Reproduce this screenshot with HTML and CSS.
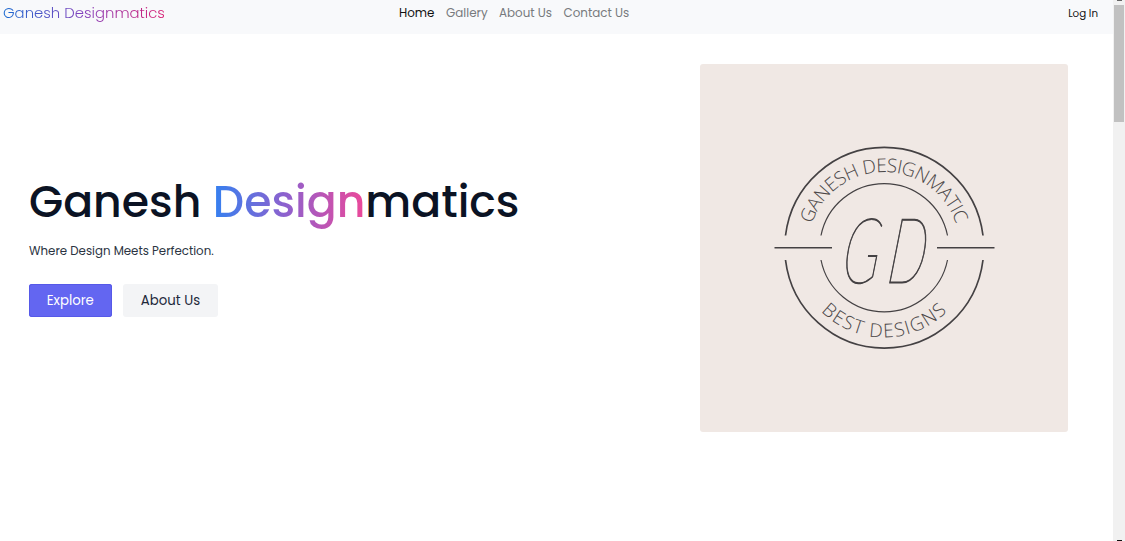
FILE: index.html
```html
<!DOCTYPE html>
<html lang="en">
<head>
<meta charset="utf-8">
<title>Ganesh Designmatics</title>
<link rel="stylesheet" href="styles.css">
</head>
<body>
<div class="page">
  <header class="navbar">
    <a class="brand"><span class="brand-text">Ganesh Designmatics</span></a>
    <nav class="links">
      <a class="link link-home">Home</a>
      <a class="link link-gallery">Gallery</a>
      <a class="link link-about">About Us</a>
      <a class="link link-contact">Contact Us</a>
    </nav>
    <a class="login">Log In</a>
  </header>
  <main class="hero">
    <section class="intro">
      <h1 class="title">Ganesh <span class="accent">Design</span>matics</h1>
      <p class="tagline">Where Design Meets Perfection.</p>
      <div class="actions">
        <a class="btn btn-primary">Explore</a>
        <a class="btn btn-light">About Us</a>
      </div>
    </section>
    <svg class="logo" viewBox="0 0 368 368" role="img" aria-label="Ganesh Designmatic, Best Designs">
      <defs>
        <path id="top-curve" d="M108 184 A76 76 0 0 1 260 184"/>
        <path id="bottom-curve" d="M94.5 184 A89.5 89.5 0 0 0 273.5 184"/>
      </defs>
      <g class="rings">
        <path class="ring-outer" d="M85.5 171.5 A99.5 100.5 0 0 1 283 171.5 M85.5 196 A99.5 100.5 0 0 0 283 196"/>
        <path class="ring-inner" d="M121 171.5 A64.5 64.5 0 0 1 247.5 171.5 M121 196 A64.5 64.5 0 0 0 247.5 196"/>
        <path class="ring-line" d="M74.5 183.7H132 M237 183.7H294.5"/>
      </g>
      <text class="ring-text"><textPath href="#top-curve" startOffset="50%" textLength="190">GANESH DESIGNMATIC</textPath></text>
      <text class="ring-text"><textPath href="#bottom-curve" startOffset="50%" textLength="140">BEST DESIGNS</textPath></text>
      <text class="monogram" transform="translate(140 219) skewX(-7) scale(.6 1)">G</text>
      <text class="monogram" transform="translate(185.5 219) skewX(-7) scale(.6 1)">D</text>
    </svg>
  </main>
</div>
<aside class="scrollbar">
  <span class="arrow"></span>
  <span class="thumb"></span>
  <span class="arrow arrow-end"></span>
</aside>
</body>
</html>
```
FILE: styles.css
```css
* { box-sizing: border-box; }
body {
  margin: 0;
  height: 541px;
  display: flex;
  overflow: hidden;
  background: #fff;
  color: #0b1324;
  font-family: Poppins, Inter, sans-serif;
}
.page { width: 1113px; }
.navbar {
  height: 34px;
  padding: 0 15px 7px 3px;
  display: grid;
  grid-template-columns: 396px 1fr auto;
  align-items: center;
  background: #f8f9fb;
  white-space: nowrap;
}
.brand { font-size: 14.85px; font-weight: 300; margin-top: -1px; }
.brand-text, .accent {
  background: linear-gradient(to right, #1668d0, #8440bc 50%, #d81b70);
  -webkit-background-clip: text;
  background-clip: text;
  color: transparent;
}
.links { display: flex; gap: 12px; }
.link { font-size: 11.9px; color: #777a7d; }
.link-home { color: #111; width: 35px; }
.link-gallery { width: 41px; }
.link-about { width: 52.5px; }
.login { font-size: 10.3px; color: #111; }
.hero {
  height: 507px;
  display: flex;
  justify-content: space-between;
  padding: 29.5px 44.8px 0 29px;
}
.intro { padding-top: 109.5px; white-space: nowrap; }
.title {
  margin: 0;
  font-size: 44.2px;
  font-weight: 500;
  line-height: 58px;
}
.accent { background-image: linear-gradient(to right, #3480f0, #9260cc 50%, #ec4899); }
.tagline { margin: 10px 0 0; font-size: 11.8px; line-height: 20px; color: #2b3442; }
.actions { display: flex; gap: 11.6px; margin-top: 23px; }
.btn {
  height: 32.5px;
  border-radius: 3px;
  font-size: 13.3px;
  line-height: 33px;
  text-align: center;
}
.btn-primary { width: 82.6px; background: #6366f1; color: #fff; box-shadow: inset 0 0 0 1px #5659e8; }
.btn-light { width: 94.6px; background: #f3f4f6; color: #1e293b; }
.logo { width: 368px; height: 368px; border-radius: 3px; background: #f0e8e4; }
.rings { fill: none; stroke: #444143; }
.ring-outer { stroke-width: 1.7; }
.ring-inner { stroke-width: 1.2; }
.ring-line { stroke-width: 1.5; }
.ring-text { font: 300 19px "Open Sans", sans-serif; fill: #4b4748; text-anchor: middle; }
.monogram { font: italic 100 91px Lato, sans-serif; fill: #444143; stroke: #444143; stroke-width: 1; }
.scrollbar {
  width: 12px;
  height: 541px;
  display: flex;
  flex-direction: column;
  align-items: center;
  background: #f1f1f1;
}
.arrow { width: 5px; height: 1px; background: #666; }
.thumb { width: 10px; height: 117px; margin-top: 4px; background: #c1c1c1; }
.arrow-end { margin-top: auto; background: #111; }
```
